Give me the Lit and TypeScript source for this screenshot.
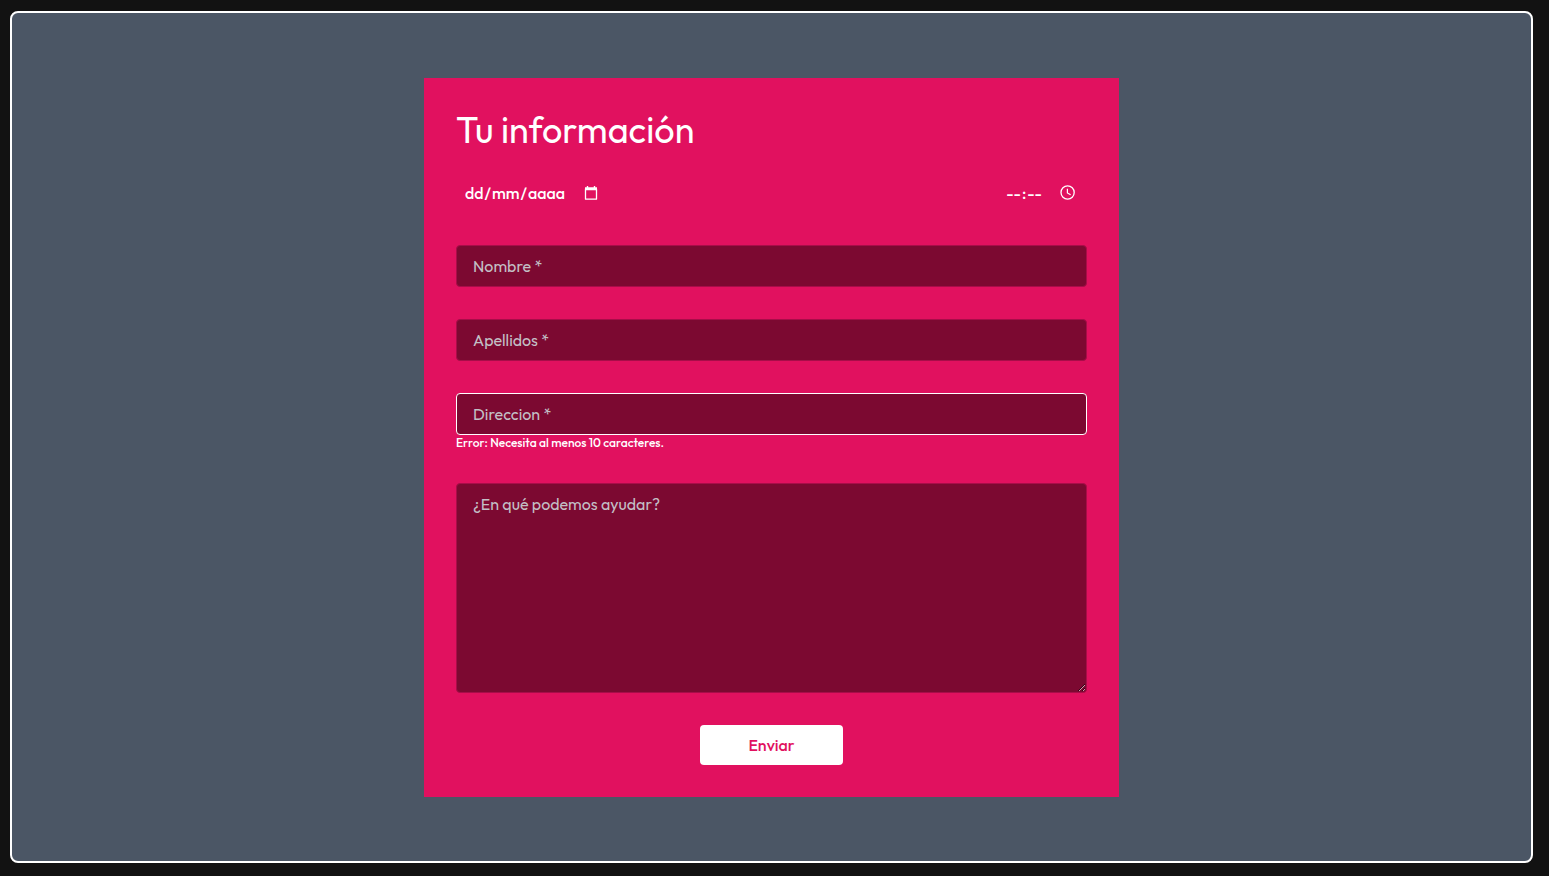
import { LitElement, html, css } from "lit";
import { customElement } from "lit/decorators.js";

@customElement("app-root")
export class AppRoot extends LitElement {
  static styles = css`
    :host {
      display: block;
      box-sizing: border-box;
      min-height: 100vh;
      padding: 11px 16px 13px 10px;
      background: #121212;
      color: #fff;
      font-family: Outfit, Lato, sans-serif;
      font-size: 16px;
      line-height: 24px;
    }
    * {
      box-sizing: border-box;
    }
    .frame {
      display: flex;
      justify-content: center;
      align-items: center;
      min-height: calc(100vh - 24px);
      border: 2px solid #fff;
      border-radius: 8px;
      background: #4b5665;
    }
    .card {
      display: flex;
      flex-direction: column;
      gap: 32px;
      width: 100%;
      max-width: 695px;
      padding: 32px;
      background: #e1115f;
    }
    .top {
      display: flex;
      flex-direction: column;
      gap: 24px;
    }
    .title {
      margin: 0;
      font-size: 36px;
      font-weight: 400;
      line-height: 40px;
    }
    .when {
      display: flex;
      justify-content: space-between;
    }
    .picker {
      display: flex;
      align-items: center;
      height: 39px;
      padding: 0 8px;
      gap: 16px;
      font-weight: 500;
    }
    .segments {
      display: flex;
    }
    .segment {
      field-sizing: content;
      padding: 0 1px;
      border: 0;
      outline: 0;
      background: transparent;
      color: #fff;
      font: inherit;
    }
    .segment::placeholder {
      color: #fff;
      opacity: 1;
    }
    .picker-button {
      display: flex;
      padding: 0;
      border: 0;
      background: transparent;
      color: inherit;
    }
    .control {
      display: block;
      width: 100%;
      padding: 8px 16px;
      border: 1px solid #a80d49;
      border-radius: 4px;
      outline: 0;
      background: #7c0931;
      color: #fff;
      font: inherit;
    }
    .control::placeholder {
      color: #c3bfc5;
      opacity: 1;
    }
    .invalid {
      border-color: #fff;
    }
    .area {
      height: 210px;
      resize: vertical;
    }
    .error {
      margin: 0;
      font-size: 12px;
      font-weight: 500;
      line-height: 16px;
    }
    .send {
      align-self: center;
      padding: 8px 48px;
      border: 0;
      border-radius: 4px;
      background: #fff;
      color: #e1115f;
      font: inherit;
      font-weight: 500;
    }
  `;

  render() {
    return html`
      <main class="frame">
        <form class="card" novalidate>
          <div class="top">
            <h1 class="title">Tu información</h1>
            <div class="when">
              <div class="picker" role="group" aria-label="Fecha">
                <div class="segments">
                  <input class="segment" type="text" maxlength="2" aria-label="Día" placeholder="dd" /><span>/</span
                  ><input class="segment" type="text" maxlength="2" aria-label="Mes" placeholder="mm" /><span>/</span
                  ><input class="segment" type="text" maxlength="4" aria-label="Año" placeholder="aaaa" />
                </div>
                <button class="picker-button" type="button" aria-label="Abrir calendario">
                  <svg width="20" height="16" viewBox="0 0 20 16" fill="none">
                    <path d="M3.5 4h11v10.2h-11z" stroke="currentColor" stroke-width="1.3" stroke-linejoin="round" />
                    <path d="M3 2.2h12v3H3zM4.8 1h1.4v2H4.8zM11.8 1h1.4v2h-1.4z" fill="currentColor" />
                  </svg>
                </button>
              </div>
              <div class="picker" role="group" aria-label="Hora">
                <div class="segments">
                  <input class="segment" type="text" maxlength="2" aria-label="Horas" placeholder="--" /><span>:</span
                  ><input class="segment" type="text" maxlength="2" aria-label="Minutos" placeholder="--" />
                </div>
                <button class="picker-button" type="button" aria-label="Abrir reloj">
                  <svg width="20" height="16" viewBox="0 0 20 16" fill="none" stroke="currentColor">
                    <circle cx="8.6" cy="7.5" r="6.6" stroke-width="1.3" />
                    <path d="M8.4 3.7v4.2l3.2 1.9" stroke-width="1.2" />
                  </svg>
                </button>
              </div>
            </div>
          </div>
          <input class="control" type="text" aria-label="Nombre" placeholder="Nombre *" />
          <input class="control" type="text" aria-label="Apellidos" placeholder="Apellidos *" />
          <div>
            <input
              class="control invalid"
              type="text"
              aria-label="Direccion"
              aria-invalid="true"
              aria-describedby="direccion-error"
              placeholder="Direccion *"
            />
            <p class="error" id="direccion-error">Error: Necesita al menos 10 caracteres.</p>
          </div>
          <textarea class="control area" aria-label="¿En qué podemos ayudar?" placeholder="¿En qué podemos ayudar?"></textarea>
          <button class="send" type="button">Enviar</button>
        </form>
      </main>
    `;
  }
}
